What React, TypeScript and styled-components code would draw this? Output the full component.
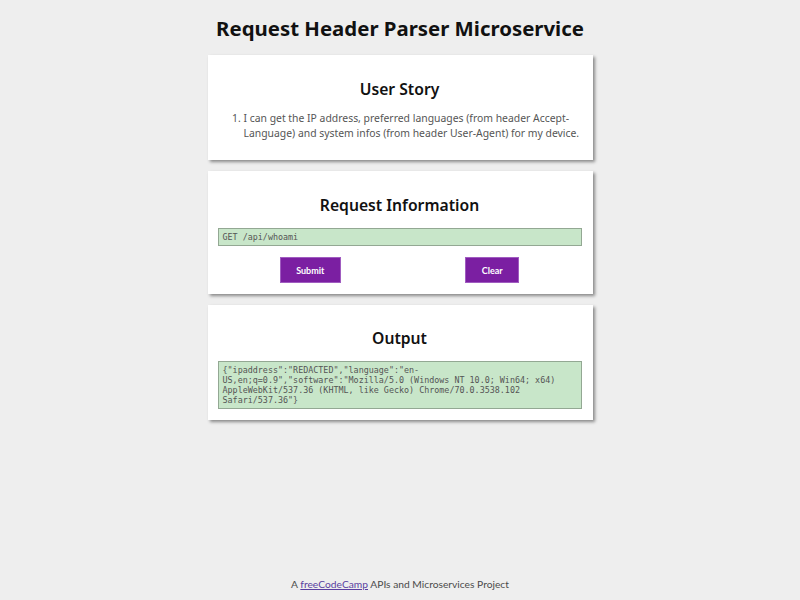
import React from "react";
import styled, { createGlobalStyle } from "styled-components";

const Global = createGlobalStyle`
  html, body { margin: 0; padding: 0; background: #eeeeee; }
  body { font-family: "Noto Sans", "Open Sans", sans-serif; color: #222; }
`;

const Page = styled.div`
  min-height: 600px;
  display: flex;
  flex-direction: column;
  align-items: center;
`;

const Title = styled.h1`
  margin: 13px 0 12px;
  font-family: "Noto Sans", sans-serif;
  font-weight: 700;
  font-size: 20.4px;
  line-height: 30px;
  color: #111;
`;

const Main = styled.main`
  display: flex;
  flex-direction: column;
  gap: 11px;
  width: 385px;
`;

const Card = styled.section<{ $top?: number }>`
  background: #fff;
  box-shadow: 2px 2px 3px #8a8a8a;
  padding: ${(p) => p.$top ?? 22}px 11px 11px 10px;
  display: flex;
  flex-direction: column;
`;

const CardTitle = styled.h2`
  margin: 0 0 11px;
  text-align: center;
  font-family: "Noto Sans", sans-serif;
  font-weight: 600;
  font-size: 15.7px;
  line-height: 24px;
  color: #111;
`;

const List = styled.ol`
  margin: -1px 0 8px;
  padding-left: 26px;
  font-family: "Noto Sans", sans-serif;
  font-size: 10.4px;
  line-height: 15px;
  color: #555;
`;

const CodeBox = styled.div<{ $pad?: string }>`
  background: #c8e6c9;
  border: 1px solid #93a893;
  font-family: "DejaVu Sans Mono", monospace;
  font-size: 8.4px;
  color: #555;
  padding: ${(p) => p.$pad || "4px"};
  line-height: 10px;
  overflow-wrap: break-word;
`;

const Buttons = styled.div`
  margin-top: 11px;
  display: flex;
  justify-content: space-around;
`;

const Button = styled.button<{ $w: number }>`
  width: ${(p) => p.$w}px;
  height: 26px;
  background: #7b1fa2;
  border: 1px solid #a05cc0;
  color: #fff;
  font-family: Lato, sans-serif;
  font-weight: 700;
  font-size: 9px;
  padding: 0;
`;

const Footer = styled.footer`
  margin-top: auto;
  padding-bottom: 10px;
  font-family: Lato, sans-serif;
  font-size: 10.25px;
  color: #4a4a4a;
  a { color: #5a3fa0; text-decoration: underline; }
`;

export default function App() {
  return (
    <>
      <Global />
      <Page>
        <Title>Request Header Parser Microservice</Title>
        <Main>
          <Card>
            <CardTitle>User Story</CardTitle>
            <List>
              <li>
                I can get the IP address, preferred languages (from header Accept-Language) and system infos (from header User-Agent) for my device.
              </li>
            </List>
          </Card>
          <Card>
            <CardTitle>Request Information</CardTitle>
            <CodeBox $pad="3px 4px">GET /api/whoami</CodeBox>
            <Buttons>
              <Button $w={61}>Submit</Button>
              <Button $w={54}>Clear</Button>
            </Buttons>
          </Card>
          <Card $top={21}>
            <CardTitle>Output</CardTitle>
            <CodeBox $pad="3px 4px">
              {'{"ipaddress":"REDACTED","language":"en-US,en;q=0.9","software":"Mozilla/5.0 (Windows NT 10.0; Win64; x64) AppleWebKit/537.36 (KHTML, like Gecko) Chrome/70.0.3538.102 Safari/537.36"}'}
            </CodeBox>
          </Card>
        </Main>
        <Footer>
          A <a href="#">freeCodeCamp</a> APIs and Microservices Project
        </Footer>
      </Page>
    </>
  );
}
